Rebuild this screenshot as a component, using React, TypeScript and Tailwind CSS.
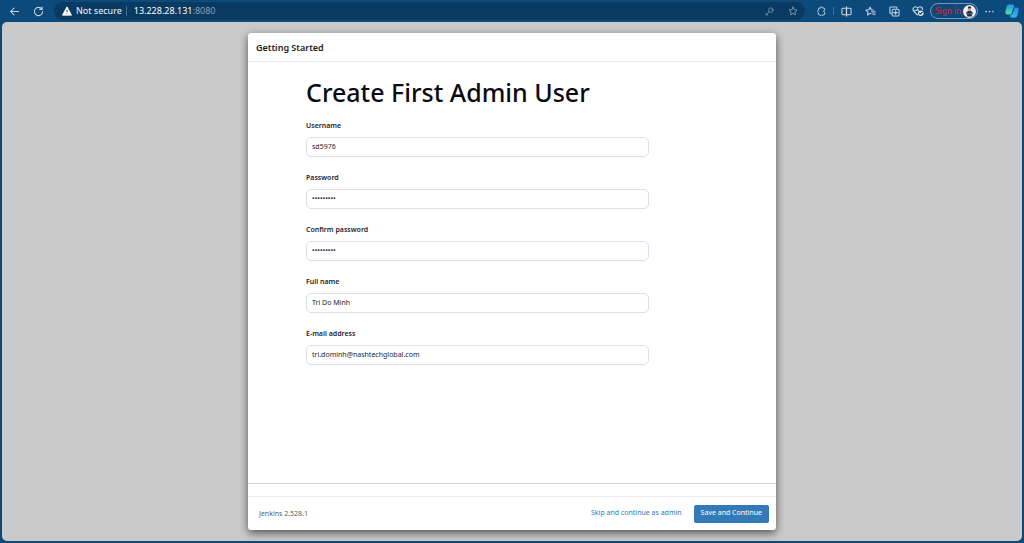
import React, { useId } from "react";
import type { ReactNode } from "react";

function Icon({ children, className = "size-3" }: { children: ReactNode; className?: string }) {
  return (
    <svg
      viewBox="0 0 24 24"
      fill="none"
      stroke="currentColor"
      strokeWidth="2.3"
      strokeLinecap="round"
      strokeLinejoin="round"
      aria-hidden="true"
      className={className}
    >
      {children}
    </svg>
  );
}

function ToolButton({ label, children }: { label: string; children: ReactNode }) {
  return (
    <button type="button" aria-label={label} className="flex h-5 w-6 shrink-0 items-center justify-center">
      {children}
    </button>
  );
}

const STAR = "M12 2.5l2.9 6.2 6.8.8-5 4.7 1.3 6.8-6-3.4L6 21l1.3-6.8-5-4.7 6.8-.8z";

function Toolbar() {
  return (
    <header className="flex h-[22px] items-center bg-[#0c4a7c] pl-0.5 text-[#c3d3e3]">
      <ToolButton label="Back">
        <Icon className="size-[11px]">
          <path d="M21 12H4M11 4.5 3.5 12l7.5 7.5" />
        </Icon>
      </ToolButton>
      <ToolButton label="Refresh">
        <Icon className="size-[11px]">
          <path d="M19.5 7A9 9 0 1 0 21 12M20 2v5.5h-5.5" />
        </Icon>
      </ToolButton>
      <div className="ml-1 flex h-[18px] flex-1 items-center rounded-full bg-[#093a62] pl-2">
        <svg viewBox="0 0 24 24" aria-hidden="true" className="size-[10px]">
          <path d="M12 2 L23 22 H1 Z" fill="#fff" stroke="#fff" strokeWidth="2" strokeLinejoin="round" />
          <path d="M12 9v6M12 18v1.5" stroke="#093a62" strokeWidth="2.4" />
        </svg>
        <span className="ml-1 text-[9px] whitespace-nowrap text-[#f4f8fb]">Not secure</span>
        <span className="mx-1 h-[10px] w-px bg-[#4b6d8c]" />
        <span className="ml-[3px] flex-1 text-[9px] whitespace-nowrap text-[#ffffff]">
          13.228.28.131<span className="text-[#8ba2b8]">:8080</span>
        </span>
        <div className="flex text-[#7893ac]">
          <ToolButton label="Saved passwords">
            <Icon className="size-[9px]">
              <circle cx="15.5" cy="8.5" r="6" />
              <path d="M11 13 3 21M3 17v4h4M16.5 7.5h.1" />
            </Icon>
          </ToolButton>
          <ToolButton label="Add to favorites">
            <Icon className="size-[10px]">
              <path d={STAR} />
            </Icon>
          </ToolButton>
        </div>
      </div>
      <div className="ml-1 flex items-center">
        <ToolButton label="Extensions">
          <Icon className="size-[10px]">
            <path d="M10 5a3 3 0 0 1 6 0h3a2 2 0 0 1 2 2v3a2.500 2.500 0 0 0 0 5v4a2 2 0 0 1-2 2h-3a3 3 0 0 1-6 0H8a2 2 0 0 1-2-2v-3a3.200 3.200 0 0 1 0-6V7a2 2 0 0 1 2-2z" />
          </Icon>
        </ToolButton>
        <span className="h-2 w-px bg-[#40709a]" />
        <ToolButton label="Split screen">
          <Icon className="size-[11px]">
            <rect x="2" y="5" width="20" height="14" rx="2" />
            <path d="M12 2v20" strokeWidth="2.800" />
          </Icon>
        </ToolButton>
        <ToolButton label="Favorites">
          <Icon className="size-[11px]">
            <path d="M13 17l-2-1-5.5 3.5 1-6.3L2 9l6.3-1L11 2.5 13.7 8l4.3.7" />
            <path d="M14 11.5h8M16 15h6M17 18.5h5" stroke="#b6a4dc" />
          </Icon>
        </ToolButton>
        <ToolButton label="Collections">
          <Icon className="size-[11px]">
            <path d="M5 17H4a2 2 0 0 1-2-2V4a2 2 0 0 1 2-2h11a2 2 0 0 1 2 2v1" />
            <rect x="7" y="7" width="15" height="15" rx="3" />
            <path d="M14.5 10.5v8M10.5 14.5h8" />
          </Icon>
        </ToolButton>
        <ToolButton label="Browser essentials">
          <Icon className="size-3">
            <path d="M11 20 3.5 12.5C0 8 3 3.5 7 3.5c2.2 0 3.5 1 4.5 2.5 1-1.500 2.500-2.500 4.500-2.500 3 0 5 2.500 5 5.500M5 11h4l2-3 3 5" />
            <circle cx="17.500" cy="16.500" r="5.500" fill="#e8eef5" stroke="none" />
            <path d="M15 16.500l2 2 3.500-4" stroke="#0c4a7c" />
          </Icon>
        </ToolButton>
        <button
          type="button"
          className="flex h-4 items-center rounded-full border border-[#8295ad] pr-px pl-1 text-[8px] font-medium whitespace-nowrap text-[#d81f35]"
        >
          Sign in
          <svg viewBox="0 0 28 28" aria-hidden="true" className="ml-0.5 size-[13px]">
            <circle cx="14" cy="14" r="14" fill="#eef1f5" />
            <path d="M10.500 6a3.500 3.500 0 0 1 7 0v2h-7z" fill="#2b2525" />
            <path d="M11 7h6v3a3 3 0 0 1-6 0z" fill="#c29080" />
            <path d="M7 19c0-5 3-6 7-6s7 1 7 6l-2 2v4H9v-4z" fill="#1c2b4c" />
            <path d="M8 17.500l6 2 6-2" stroke="#b98c80" strokeWidth="1.500" fill="none" />
          </svg>
        </button>
        <button
          type="button"
          aria-label="Settings and more"
          className="flex h-5 w-[22px] items-center justify-center"
        >
          <svg viewBox="0 0 24 24" fill="currentColor" aria-hidden="true" className="size-[9px]">
            <circle cx="3" cy="12" r="2.300" />
            <circle cx="12" cy="12" r="2.300" />
            <circle cx="21" cy="12" r="2.300" />
          </svg>
        </button>
        <ToolButton label="Copilot">
          <svg viewBox="0 0 28 28" aria-hidden="true" className="size-[14px]">
            <defs>
              <linearGradient id="copilotLeft" x1="0" y1="0" x2="0" y2="1">
                <stop offset="0" stopColor="#1c96f3" />
                <stop offset="1" stopColor="#5bdd9a" />
              </linearGradient>
              <linearGradient id="copilotRight" x1="0" y1="0" x2="0" y2="1">
                <stop offset="0" stopColor="#2f7fe8" />
                <stop offset="1" stopColor="#37b9f4" />
              </linearGradient>
            </defs>
            <path
              d="M8 1h7c2.500 0 3.500 2 3 4l-3.500 12c-.8 2.500-2 4-4.500 4H5c-4 0-5-3-4-7l2.500-9C4.200 2.500 5.500 1 8 1z"
              fill="url(#copilotLeft)"
            />
            <path
              d="M18 7h5c4 0 5 3 4 7l-2.500 9c-.7 2.500-1.800 4-4 4h-7c-3 0-3.500-2-2.800-4z"
              fill="url(#copilotRight)"
            />
            <path d="M18 7l-3 10c-.5 2-1.500 3.500-3.500 4" stroke="#0c4a7c" strokeWidth="2" fill="none" />
          </svg>
        </ToolButton>
      </div>
    </header>
  );
}

function Field({ label, type = "text", value }: { label: string; type?: string; value: string }) {
  const id = useId();
  return (
    <div className="flex flex-col gap-1.5">
      <label htmlFor={id} className="text-[7px] leading-[10px] font-semibold text-[#24242c]">
        {label}
      </label>
      <input
        id={id}
        type={type}
        defaultValue={value}
        className="h-5 w-full rounded-[5px] border border-[#dadfeb] bg-white px-[5px] pb-px text-[7px] text-[#24242c] outline-none"
      />
    </div>
  );
}

export default function App() {
  return (
    <div className="flex min-h-screen flex-col bg-[#0c4a7c] font-['Noto_Sans',sans-serif]">
      <Toolbar />
      <main className="mx-0.5 mb-0.5 flex flex-1 flex-col items-center rounded-[5px] bg-[#cacaca] py-[11px]">
        <form
          onSubmit={(event) => event.preventDefault()}
          className="flex w-full max-w-[528px] flex-1 flex-col rounded-[3px] bg-white shadow-[0_3px_9px_rgba(0,0,0,0.6)]"
        >
          <div className="border-b border-[#e8e8ea] px-2 pt-2 pb-1.5 text-[9px] leading-[14px] font-semibold text-[#1a1a22]">
            Getting Started
          </div>
          <div className="flex-1 border-b border-[#d6d6d8] px-[58px] pt-3 pb-6">
            <h1 className="text-[25px] leading-9 font-medium text-[#0a0a14]">Create First Admin User</h1>
            <div className="mt-[11px] flex max-w-[343px] flex-col gap-4">
              <Field label="Username" value="sd5976" />
              <Field label="Password" type="password" value="admin5976" />
              <Field label="Confirm password" type="password" value="admin5976" />
              <Field label="Full name" value="Tri Do Minh" />
              <Field label="E-mail address" value="tri.dominh@nashtechglobal.com" />
            </div>
          </div>
          <footer className="mt-3 flex h-[34px] items-center border-t border-[#ececee] pr-[7px] pl-[11px]">
            <span className="flex-1 pt-0.5 text-[7px] text-[#5c5c64]">Jenkins 2.528.1</span>
            <button type="button" className="px-3 text-[7px] text-[#337ab7]">
              Skip and continue as admin
            </button>
            <button type="submit" className="h-[18px] rounded-[2px] bg-[#337ab7] px-[7px] text-[7px] text-white">
              Save and Continue
            </button>
          </footer>
        </form>
      </main>
    </div>
  );
}
